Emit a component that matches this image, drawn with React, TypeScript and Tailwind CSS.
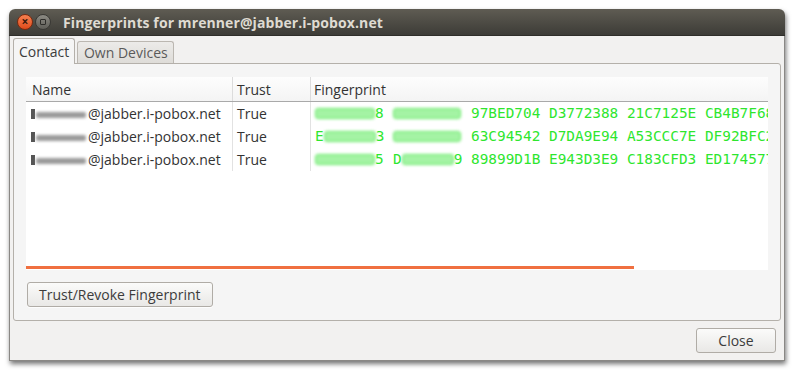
import React from "react";

const ui = { fontFamily: '"Open Sans", "Noto Sans", "DejaVu Sans", sans-serif' };
const mono = { fontFamily: '"DejaVu Sans Mono", "Liberation Mono", monospace' };

function Smear({ w, color = "#a4f3a4" }: { w: number; color?: string }) {
  return (
    <span
      className="inline-block h-[11px] align-middle rounded-[3px] blur-[1.5px] border border-[#5ee85e]"
      style={{ width: w, background: color }}
    />
  );
}

function NameCell() {
  return (
    <div className="flex items-center h-full pl-[5px]">
      <span className="inline-flex items-center w-[57px] h-full shrink-0">
        <span className="inline-block w-[4px] h-[10px] bg-[#555] blur-[0.6px] mr-[1px]" />
        <span className="inline-block w-[50px] h-[6px] mt-[3px] bg-[#9a9a9a] rounded-[2px] blur-[1.5px]" />
      </span>
      <span>@jabber.i-pobox.net</span>
    </div>
  );
}

type Row = { g1: React.ReactNode; g2: React.ReactNode; rest: string };

const rows: Row[] = [
  {
    g1: (
      <>
        <Smear w={60} />
        <span>8</span>
      </>
    ),
    g2: <Smear w={68} />,
    rest: "97BED704 D3772388 21C7125E CB4B7F68",
  },
  {
    g1: (
      <>
        <span>E</span>
        <Smear w={52} />
        <span>3</span>
      </>
    ),
    g2: <Smear w={68} />,
    rest: "63C94542 D7DA9E94 A53CCC7E DF92BFC2",
  },
  {
    g1: (
      <>
        <Smear w={60} />
        <span>5</span>
      </>
    ),
    g2: (
      <>
        <span>D</span>
        <Smear w={52} />
        <span>9</span>
      </>
    ),
    rest: "89899D1B E943D3E9 C183CFD3 ED174577",
  },
];

export default function App() {
  return (
    <div className="w-[800px] h-[377px] bg-white pt-[9px] pl-[9px] overflow-hidden" style={ui}>
      <div className="w-[776px] h-[352px] flex flex-col rounded-t-[6px] shadow-[1px_3px_5px_rgba(0,0,0,0.55)]">
        {/* Title bar */}
        <div className="h-[27px] flex items-center rounded-t-[6px] bg-gradient-to-b from-[#5f5c53] to-[#3d3c37] pl-[8px] border-b border-[#2f2e2a]">
          <div className="w-[16px] h-[16px] rounded-full bg-gradient-to-b from-[#f6804f] to-[#df4a18] border border-[#7a2a10] flex items-center justify-center">
            <span className="text-[#3a1a0c] text-[12px] font-bold leading-none mt-[-1px]">×</span>
          </div>
          <div className="ml-[2px] w-[16px] h-[16px] rounded-full bg-gradient-to-b from-[#8d8b84] to-[#5f5e58] border border-[#3a3935] flex items-center justify-center">
            <span className="w-[6px] h-[6px] border border-[#2e2d2a] rounded-[1px]" />
          </div>
          <div className="ml-[12px] mt-[1px] text-[14px] font-bold text-[#dfdbd2] tracking-[0.1px]">
            Fingerprints for mrenner@jabber.i-pobox.net
          </div>
        </div>

        {/* Body */}
        <div className="flex-1 bg-[#f2f1f0] flex flex-col px-[3px] pt-[2px] border-x border-b border-[#8a8885]">
          {/* Tabs */}
          <div className="flex items-end h-[25px] relative z-10">
            <div className="h-[26px] px-[5px] flex items-center bg-[#f5f5f5] border border-b-0 border-[#b4b0aa] rounded-t-[3px] text-[14px] text-[#3c3c3c] mb-[-1px]">
              Contact
            </div>
            <div className="ml-[2px] h-[22px] w-[97px] flex items-center justify-center bg-gradient-to-b from-[#ecebe9] to-[#dedcd8] border border-b-0 border-[#bbb7b1] rounded-t-[3px] text-[14px] text-[#5a5a5a]">
              Own Devices
            </div>
          </div>
          {/* Notebook frame */}
          <div className="h-[258px] bg-[#f5f5f5] border border-[#b4b0aa] rounded-b-[3px] rounded-tr-[3px] flex flex-col pl-[12px] pr-[12px] pt-[13px]">
            {/* Tree view */}
            <div className="h-[193px] bg-white flex flex-col overflow-hidden text-[14px] text-[#333333]">
              <div className="h-[25px] flex shrink-0 bg-gradient-to-b from-[#fdfdfd] to-[#f4f4f4] border-b border-[#a9a9a9]">
                <div className="w-[207px] pl-[6px] flex items-center border-r border-[#dcdcdc]">Name</div>
                <div className="w-[78px] pl-[4px] flex items-center border-r border-[#dcdcdc]">Trust</div>
                <div className="flex-1 pl-[3px] flex items-center">Fingerprint</div>
              </div>
              {rows.map((r, i) => (
                <div key={i} className="h-[23px] flex shrink-0">
                  <div className="w-[207px] shrink-0 border-r border-[#e2e2e2]">
                    <NameCell />
                  </div>
                  <div className="w-[78px] shrink-0 pl-[4px] flex items-center border-r border-[#e2e2e2]">True</div>
                  <div
                    className="flex-1 min-w-0 pl-[4px] flex items-center whitespace-pre overflow-hidden text-[14.4px] text-[#2ee62e]"
                    style={mono}
                  >
                    <span className="inline-flex items-center w-[78px] shrink-0">{r.g1}</span>
                    <span className="inline-flex items-center w-[78px] shrink-0">{r.g2}</span>
                    <span className="shrink-0">{r.rest}</span>
                  </div>
                </div>
              ))}
              <div className="flex-1" />
              <div className="h-[3px] w-[608px] bg-[#f07040] mb-[1px]" />
            </div>
            <div className="mt-[12px]">
              <button className="h-[25px] px-[11px] ml-[1px] bg-gradient-to-b from-[#fbfbfa] to-[#e9e8e6] border border-[#b0aca6] rounded-[3px] text-[14px] text-[#3c3c3c] shadow-[0_1px_0_rgba(255,255,255,0.8)]">
                Trust/Revoke Fingerprint
              </button>
            </div>
          </div>
          {/* Dialog buttons */}
          <div className="flex justify-end pt-[7px] pr-[5px]">
            <button className="h-[25px] w-[80px] bg-gradient-to-b from-[#fbfbfa] to-[#e9e8e6] border border-[#b0aca6] rounded-[3px] text-[14px] text-[#3c3c3c]">
              Close
            </button>
          </div>
        </div>
      </div>
    </div>
  );
}
